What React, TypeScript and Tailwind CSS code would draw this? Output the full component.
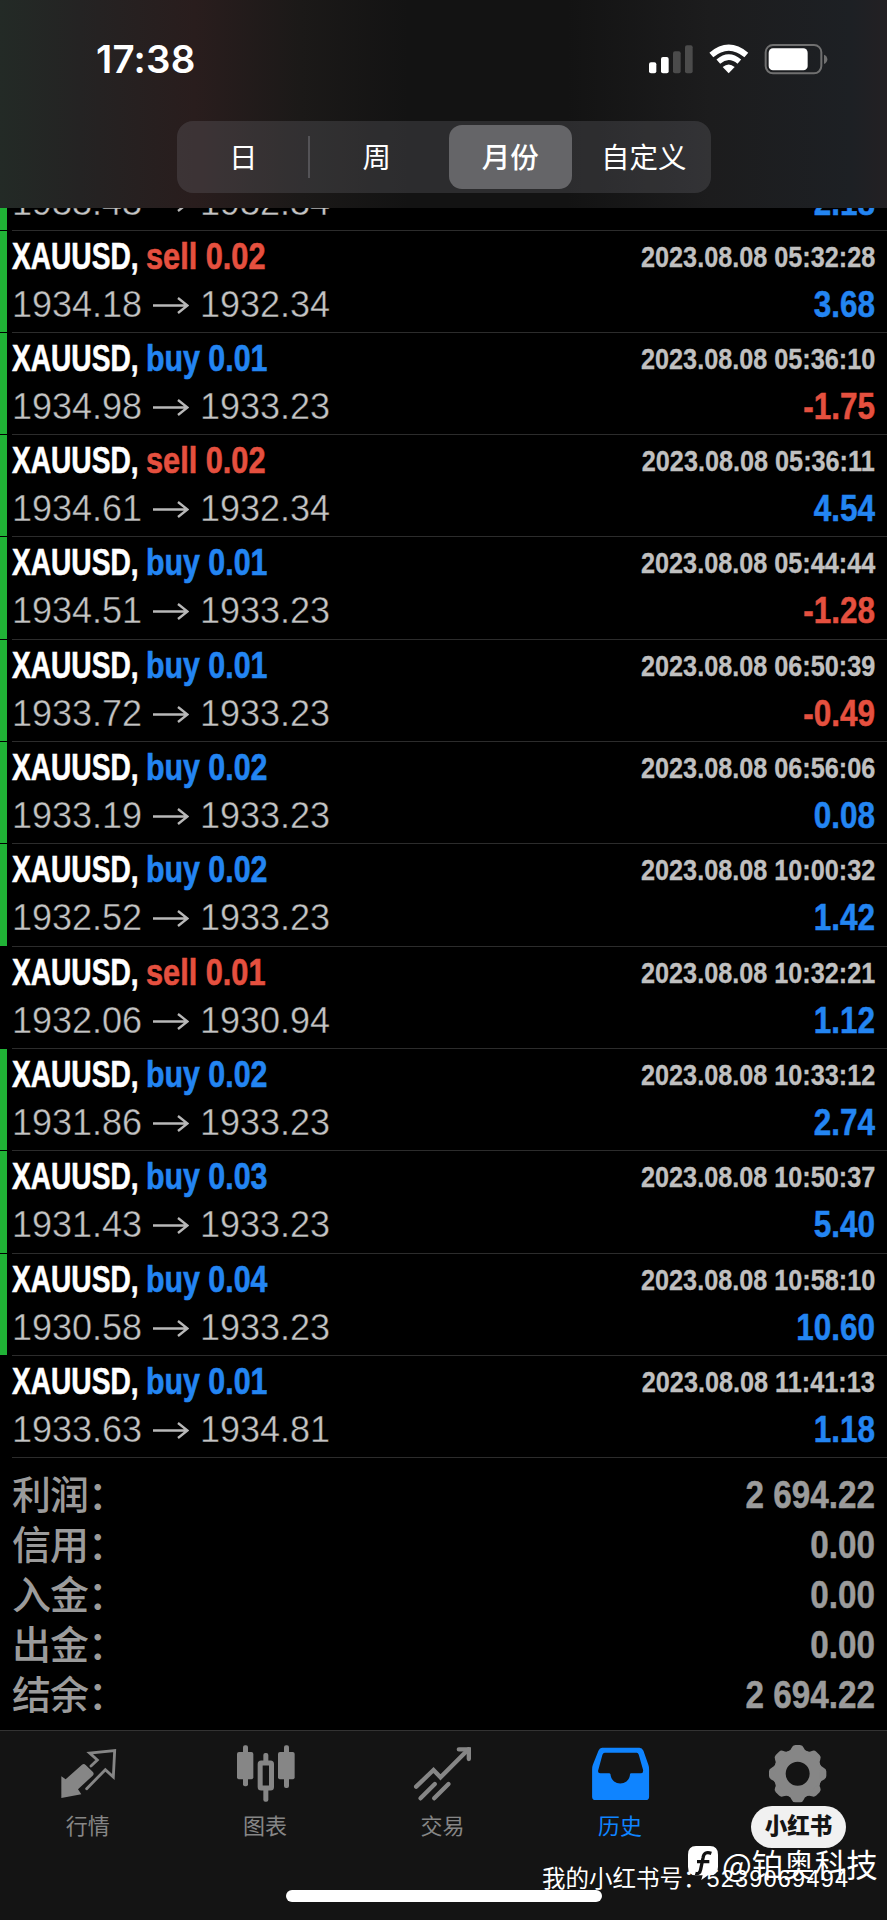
import type { ReactNode } from 'react';
import clsx from 'clsx';

type Side = 'buy' | 'sell';

interface Deal {
  side: Side;
  lots: string;
  open: string;
  close: string;
  time: string;
  profit: string;
  marked: boolean;
}

const deals: Deal[] = [
  { side: 'sell', lots: '0.02', open: '1934.18', close: '1932.34', time: '05:32:28', profit: '3.68', marked: true },
  { side: 'buy', lots: '0.01', open: '1934.98', close: '1933.23', time: '05:36:10', profit: '-1.75', marked: true },
  { side: 'sell', lots: '0.02', open: '1934.61', close: '1932.34', time: '05:36:11', profit: '4.54', marked: true },
  { side: 'buy', lots: '0.01', open: '1934.51', close: '1933.23', time: '05:44:44', profit: '-1.28', marked: true },
  { side: 'buy', lots: '0.01', open: '1933.72', close: '1933.23', time: '06:50:39', profit: '-0.49', marked: true },
  { side: 'buy', lots: '0.02', open: '1933.19', close: '1933.23', time: '06:56:06', profit: '0.08', marked: true },
  { side: 'buy', lots: '0.02', open: '1932.52', close: '1933.23', time: '10:00:32', profit: '1.42', marked: true },
  { side: 'sell', lots: '0.01', open: '1932.06', close: '1930.94', time: '10:32:21', profit: '1.12', marked: false },
  { side: 'buy', lots: '0.02', open: '1931.86', close: '1933.23', time: '10:33:12', profit: '2.74', marked: true },
  { side: 'buy', lots: '0.03', open: '1931.43', close: '1933.23', time: '10:50:37', profit: '5.40', marked: true },
  { side: 'buy', lots: '0.04', open: '1930.58', close: '1933.23', time: '10:58:10', profit: '10.60', marked: true },
  { side: 'buy', lots: '0.01', open: '1933.63', close: '1934.81', time: '11:41:13', profit: '1.18', marked: false },
];

const summary = [
  ['利润：', '2 694.22'],
  ['信用：', '0.00'],
  ['入金：', '0.00'],
  ['出金：', '0.00'],
  ['结余：', '2 694.22'],
];

const periods = ['日', '周', '月份', '自定义'];

function StatusIcons() {
  return (
    <svg width="180" height="32" viewBox="84 68 540 96" fill="white">
      <rect x="87" y="126" width="22" height="33" rx="6" />
      <rect x="123" y="110" width="23" height="49" rx="6" />
      <rect x="159" y="93" width="23" height="66" rx="6" fill="#4b4b4b" />
      <rect x="195" y="75" width="23" height="84" rx="6" fill="#4b4b4b" />
      <path d="M326 159 L308 140 Q326 125 344 140 Z" />
      <path d="M295 124 Q326 97 358 124" fill="none" stroke="white" strokeWidth="17" />
      <path d="M274 104 Q326 60 379 104" fill="none" stroke="white" strokeWidth="18" />
      <rect x="437" y="74" width="167" height="85" rx="22" fill="none" stroke="#707070" strokeWidth="6" />
      <rect x="446" y="84" width="117" height="66" rx="13" />
      <path d="M612 103 Q622 107 622 117 Q622 127 612 131 Z" fill="#707070" />
    </svg>
  );
}

function PriceLine({ open, close, profit }: { open: string; close: string; profit: string }) {
  return (
    <div className="flex h-12 items-center justify-between leading-[48px]">
      <div className="flex items-center text-[36px] text-[#c4c4c4] [-webkit-text-stroke:0.4px_black]">
        <span className="w-[141px]">{open}</span>
        <svg width="36" height="20" viewBox="0 0 36 20" fill="none" stroke="#b8b8b8" strokeWidth="2.4">
          <path d="M0 10.5H34M25 3 34.5 10.5 25 18" />
        </svg>
        <span className="ml-[11px]">{close}</span>
      </div>
      <span
        className={clsx(
          'origin-right scale-x-[0.875] text-[36px] font-bold [-webkit-text-stroke:0.5px]',
          profit.startsWith('-') ? 'text-[#e5503f]' : 'text-[#2385f2]',
        )}
      >
        {profit}
      </span>
    </div>
  );
}

function DealRow({ deal }: { deal: Deal }) {
  return (
    <div className="flex h-[102.33px] shrink-0">
      <div className={clsx('mb-px w-[7px]', deal.marked && 'bg-[#20b236]')} />
      <div className="ml-[5px] flex-1 border-b border-[#2c2c2c] pt-[4px] pr-[12px]">
        <div className="flex h-[44px] justify-between font-bold leading-[44px] [-webkit-text-stroke:0.6px]">
          <div className="flex text-[37px]">
            <span className="w-[134px] origin-left scale-x-[0.76] whitespace-nowrap text-white">XAUUSD,</span>
            <span
              className={clsx(
                'origin-left whitespace-nowrap',
                deal.side === 'buy' ? 'scale-x-[0.82] text-[#2385f2]' : 'scale-x-[0.83] text-[#e5503f]',
              )}
            >
              {deal.side} {deal.lots}
            </span>
          </div>
          <span className="origin-right scale-x-[0.87] text-[29px] text-[#c0c0c0] [-webkit-text-stroke:0.3px]">
            2023.08.08 {deal.time}
          </span>
        </div>
        <div className="mt-[2px]">
          <PriceLine open={deal.open} close={deal.close} profit={deal.profit} />
        </div>
      </div>
    </div>
  );
}

function QuotesIcon() {
  return (
    <svg width="60" height="60" viewBox="26 27 180 180">
      <path d="M33 124 46 133 95 89Q101 84 106 90L127 110Q133 116 127 122L83 163 93 178 33 189Z" fill="currentColor" />
      <path d="M122 93 141 75 118 54 193 47 189 126 165 104 109 161" fill="none" stroke="currentColor" strokeWidth="8.5" strokeLinecap="round" />
    </svg>
  );
}

function ChartIcon() {
  return (
    <svg width="60" height="60" viewBox="708 72 180 180" fill="currentColor">
      <rect x="729" y="76" width="15" height="123" rx="6" />
      <rect x="711" y="96" width="49" height="82" rx="6" />
      <rect x="790" y="99" width="15" height="34" rx="6" />
      <rect x="790" y="204" width="15" height="41" rx="6" />
      <rect x="780.5" y="129" width="34" height="75" rx="3" fill="none" stroke="currentColor" strokeWidth="15" />
      <rect x="852" y="76" width="15" height="128" rx="6" />
      <rect x="834" y="96" width="50" height="82" rx="6" />
    </svg>
  );
}

function TradeIcon() {
  return (
    <svg width="60" height="60" viewBox="25.5 27 180 180" fill="none" stroke="currentColor" strokeWidth="13" strokeLinecap="round">
      <path d="M35 155 87 105 108 127 192 43" />
      <path d="M163 43H193V72" />
      <path d="M48 190 91 147M89 190 132 147" />
    </svg>
  );
}

function HistoryIcon() {
  return (
    <svg width="60" height="60" viewBox="452.7 72 180 180">
      <path
        fill="currentColor"
        fillRule="evenodd"
        d="M486 83H598Q606 83 610 92L625 135Q627 140 627 148V230Q627 240 617 240H466Q456 240 456 230V148Q456 140 458 135L475 92Q479 83 486 83ZM494 98H590Q594 98 596 104L609 150Q610 160 603 160H572Q569 160 569 168A29 28 0 0 1 512 168Q512 160 508 160H480Q473 160 474 152L487 104Q489 98 494 98Z"
      />
    </svg>
  );
}

function SettingsIcon() {
  const teeth = [0, 45, 90, 135, 180, 225, 270, 315];
  return (
    <svg width="60" height="60" viewBox="-89 -89 180 180" fill="currentColor">
      <circle r="54.5" fill="none" stroke="currentColor" strokeWidth="37" />
      {teeth.map((deg) => (
        <path key={deg} transform={`rotate(${deg})`} d="M-29-66Q-20-71-18-78-15-86-7-86H7Q15-86 18-78 20-71 29-66Z" />
      ))}
    </svg>
  );
}

function Tab({ icon, label, active }: { icon: ReactNode; label?: string; active?: boolean }) {
  return (
    <div className={clsx('flex flex-col items-center pt-[13px]', active ? 'text-[#0f84ff]' : 'text-[#868686]')}>
      {icon}
      {label && <span className="mt-[6px] mr-[2px] text-[22px] leading-[34px]">{label}</span>}
    </div>
  );
}

export default function App() {
  return (
    <div className="relative flex h-[1920px] w-[887px] flex-col overflow-hidden bg-black font-['Liberation_Sans','Noto_Sans_CJK_SC',sans-serif]">
      <header className="h-[208px] shrink-0 bg-[linear-gradient(90deg,#232a26_0%,#242323_9%,#291d1d_22%,#1b1918_34%,#131313_46%,#131313_64%,#1c1c1d_80%,#1d2024_96%,#232023_100%)]">
        <div className="flex h-[121px] items-start justify-between pt-[38px] pr-[59px] pl-[96px]">
          <span className="font-['Inter',sans-serif] text-[38.5px] leading-[43px] font-semibold tracking-[0.2px] text-white">17:38</span>
          <div className="pt-[5px]">
            <StatusIcons />
          </div>
        </div>
        <div className="mx-auto grid h-[72px] w-[534px] grid-cols-4 rounded-[16px] bg-[#767680]/25 py-[4px]">
          {periods.map((period, i) => (
            <div key={period} className="relative px-[5px]">
              <div
                className={clsx(
                  'flex h-full items-center justify-center rounded-[13px] pt-[3px] text-[28.5px] text-white',
                  period === '月份' && 'bg-[#656568] font-medium',
                )}
              >
                {period}
              </div>
              {i === 0 && <div className="absolute top-[11px] right-0 h-[42px] w-[2px] bg-[#545357]" />}
            </div>
          ))}
        </div>
      </header>

      <div className="flex h-[22.5px] shrink-0 overflow-hidden">
        <div className="mb-px w-[7px] bg-[#20b236]" />
        <div className="ml-[5px] flex flex-1 flex-col justify-end border-b border-[#2c2c2c] pr-[12px] pb-[3px]">
          <PriceLine open="1933.43" close="1932.34" profit="2.18" />
        </div>
      </div>
      {deals.map((deal) => (
        <DealRow key={deal.time} deal={deal} />
      ))}

      <div className="flex-1 px-[12px] pt-[12px] font-bold text-[#9b9b9b]">
        {summary.map(([label, value]) => (
          <div key={label} className="flex h-[50px] items-center justify-between leading-[50px]">
            <span className="pt-[2px] text-[39px] font-medium tracking-[-1px]">{label}</span>
            <span className="origin-right scale-x-[0.875] text-[38px] [-webkit-text-stroke:0.5px]">{value}</span>
          </div>
        ))}
      </div>

      <nav className="relative h-[190px] shrink-0 border-t border-[#333] bg-[#141414]">
        <div className="grid grid-cols-5">
          <Tab icon={<QuotesIcon />} label="行情" />
          <Tab icon={<ChartIcon />} label="图表" />
          <Tab icon={<TradeIcon />} label="交易" />
          <Tab icon={<HistoryIcon />} label="历史" active />
          <Tab icon={<SettingsIcon />} />
        </div>
        <div className="absolute top-[159px] left-[286px] h-[12px] w-[316px] rounded-full bg-white" />

        <div className="absolute top-[75px] left-[751px] flex h-[42px] w-[95px] items-center justify-center rounded-full bg-[#f1f1f1] text-[22.5px] font-black text-[#151515]">
          小红书
        </div>
        <div className="absolute top-[131px] left-[542px] text-[23.5px] leading-[34px] whitespace-nowrap text-white">
          我的小红书号：<span className="tracking-[1.2px]">5239069494</span>
        </div>
        <div className="absolute top-[111px] left-[688px] flex items-center text-white">
          <svg width="30" height="34" viewBox="0 0 90 102">
            <path d="M24 0H66Q90 0 90 26V62Q90 88 66 88H60L40 102 44 88H24Q0 88 0 62V26Q0 0 24 0Z" fill="white" />
            <path d="M70 22Q48 14 45 36L38 70Q35 86 22 82M27 47H64" fill="none" stroke="#111" strokeWidth="10" />
          </svg>
          <span className="ml-[4px] font-['Noto_Sans_CJK_SC',sans-serif] text-[31.5px] leading-[42px] whitespace-nowrap">@铂奥科技</span>
        </div>
      </nav>
    </div>
  );
}
